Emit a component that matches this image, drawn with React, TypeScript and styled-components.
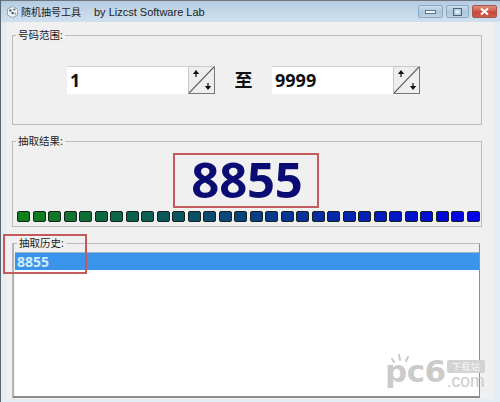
import React from 'react'
import styled, { createGlobalStyle } from 'styled-components'

const GlobalStyle = createGlobalStyle`
    html, body {
        margin: 0;
        padding: 0;
        background: #f0f0f0;
    }
`

const CJK = `"Noto Sans", "Noto Sans CJK SC", sans-serif`

const Window = styled.div`
    position: relative;
    width: 500px;
    height: 402px;
    overflow: hidden;
    box-sizing: border-box;
    display: flex;
    flex-direction: column;
    background: #e4edf4;
    border-left: 1px solid #5d666e;
    border-top: 1px solid #6d767e;
    font-family: ${CJK};
    color: #222;
`

const TitleBar = styled.div`
    height: 21px;
    flex: none;
    display: flex;
    align-items: center;
    padding: 0 3px 0 6px;
    background: linear-gradient(180deg, #b4cbe0 0%, #c6d9ea 55%, #cfdfee 100%);
`

const TitleText = styled.span`
    font-size: 10px;
    margin-left: 3px;
    color: #1c1c1c;
    white-space: nowrap;
`

const TitleBy = styled.span`
    font-family: "Liberation Sans", sans-serif;
    font-size: 11px;
    margin-left: 13px;
    color: #1c1c1c;
    white-space: nowrap;
`

const WindowButtons = styled.div`
    margin-left: auto;
    display: flex;
    gap: 3px;
`

const WindowButton = styled.div<{ $close?: boolean; $width: number }>`
    width: ${p => p.$width}px;
    height: 13px;
    box-sizing: border-box;
    display: flex;
    align-items: center;
    justify-content: center;
    border: 1px solid ${p => (p.$close ? '#a5524a' : '#8ea8c0')};
    border-radius: 2px;
    background: ${p => (p.$close
        ? 'linear-gradient(180deg, #e0907f 0%, #c9483a 60%, #c9604c 100%)'
        : 'linear-gradient(180deg, #c9dcec 0%, #aac5dc 60%, #bcd3e6 100%)')};
`

const Body = styled.div`
    flex: 1;
    margin: 0 6px 3px 5px;
    background: #f0f0f0;
    padding: 6px 0 0 6px;
    display: flex;
    flex-direction: column;
    gap: 9px;
`

const Group = styled.fieldset<{ $width: number; $height: number; $dark?: boolean }>`
    width: ${p => p.$width}px;
    height: ${p => p.$height}px;
    box-sizing: border-box;
    margin: 0;
    padding: 0;
    flex: none;
    min-width: 0;
    border: 1px solid #bcbcbc;
    ${p => p.$dark && `
        border-width: 1px 1px 2px 2px;
        border-left-color: #b4b4b4;
        border-right-color: #8e8e8e;
        border-bottom-color: #8b8b8b;
    `}
`

const Legend = styled.legend`
    margin-left: 3px;
    padding: 0 2px;
    font-size: 10.5px;
    line-height: 14px;
    color: #222;
`

const RangeRow = styled.div`
    display: flex;
    align-items: stretch;
    height: 28px;
    margin: 24px 0 0 54px;
`

const NumberBox = styled.div`
    width: 121px;
    background: #ffffff;
    box-sizing: border-box;
    padding-left: 3px;
    font-family: "Open Sans", sans-serif;
    font-weight: 700;
    font-size: 18px;
    line-height: 27px;
    color: #111;
    border-top: 1px solid #d4d4d4;
`

const Spinner = styled.div`
    width: 27px;
    box-sizing: border-box;
    background: #eeeeee;
    border: 1px solid;
    border-color: #c9c9c9 #777 #777 #c9c9c9;
    line-height: 0;
`

const ToLabel = styled.div`
    width: 57px;
    text-align: center;
    font-size: 18px;
    font-weight: 700;
    line-height: 28px;
    color: #111;
`

const ResultNumber = styled.div`
    text-align: center;
    font-family: "Open Sans", sans-serif;
    font-weight: 700;
    font-size: 49px;
    line-height: 52px;
    color: #0b0b74;
    margin: 5px 0 0 0;
    height: 52px;
    letter-spacing: -0.2px;
`

const Meter = styled.div`
    display: flex;
    gap: 2.5px;
    margin: 6px 0 0 4px;
`

const Cell = styled.div<{ $bg: string }>`
    width: 13px;
    height: 11px;
    flex: none;
    box-sizing: border-box;
    background: ${p => p.$bg};
    border: 1px solid #14231f;
    border-radius: 2px;
`

const HistoryList = styled.div`
    margin: 2px 0 0 1px;
    height: 144px;
    background: #ffffff;
`

const HistoryRow = styled.div`
    height: 18px;
    background: #3b94ec;
    color: #cfeeff;
    padding-left: 2px;
    font-family: "Open Sans", sans-serif;
    font-weight: 700;
    font-size: 14px;
    line-height: 17px;
    border-top: 1px solid #9cb4c9;
    box-sizing: border-box;
`

const RedBox = styled.div<{ $x: number; $y: number; $w: number; $h: number }>`
    position: absolute;
    left: ${p => p.$x}px;
    top: ${p => p.$y}px;
    width: ${p => p.$w}px;
    height: ${p => p.$h}px;
    box-sizing: border-box;
    border: 2px solid #c45a5e;
    pointer-events: none;
`

const Watermark = styled.div`
    position: absolute;
    left: 384px;
    top: 352px;
    width: 106px;
    height: 38px;
    display: flex;
    color: #cbcbcb;
    pointer-events: none;
`

const MarkBig = styled.div`
    font-family: "DejaVu Sans", sans-serif;
    font-weight: 700;
    font-size: 31px;
    line-height: 36px;
    letter-spacing: -0.5px;
`

const MarkRays = styled.svg`
    position: absolute;
    left: 6px;
    top: 1px;
`

const MarkSide = styled.div`
    margin: 7px 0 0 1px;
    display: flex;
    flex-direction: column;
    align-items: stretch;
`

const MarkBadge = styled.div`
    width: 38px;
    height: 13px;
    box-sizing: border-box;
    background: #d3d3d3;
    color: #f6f6f6;
    border-radius: 2px;
    text-align: center;
    font-size: 9.5px;
    line-height: 13px;
    overflow: hidden;
`

const MarkCom = styled.div`
    font-family: "Liberation Sans", sans-serif;
    font-size: 17.5px;
    line-height: 15px;
    margin-top: 1px;
`

function Arrows() {
    return (
        <svg width="25" height="26" viewBox="0 0 25 26">
            <path d="M0 26 L25 0" stroke="#555" strokeWidth="1.2" fill="none" />
            <path d="M7 6 V10 M5 6.5 L7 4 L9 6.5 Z" stroke="#111" strokeWidth="1.2" fill="#111" />
            <path d="M19 16 V20 M17 19.5 L19 22 L21 19.5 Z" stroke="#111" strokeWidth="1.2" fill="#111" />
        </svg>
    )
}

function AppIcon() {
    return (
        <svg width="11" height="12" viewBox="0 0 11 12">
            <path d="M5.5 0.5 L10.5 3 V9 L5.5 11.5 L0.5 9 V3 Z" fill="#eef2f4" stroke="#8a9aa6" strokeWidth="0.8" />
            <circle cx="3.4" cy="4.4" r="1.2" fill="#4a5a62" />
            <circle cx="7.4" cy="3.6" r="1" fill="#4a5a62" />
            <circle cx="5.6" cy="7" r="1.2" fill="#4a5a62" />
            <circle cx="8.4" cy="7.6" r="0.9" fill="#7a8a92" />
        </svg>
    )
}

// green to blue across the meter, same as the original progress bar
const cellColor = (i: number, total: number) => {
    const t = i / (total - 1)
    const r = Math.round(16 * (1 - t))
    const g = Math.round(128 * (1 - t))
    const b = Math.round(26 + (232 - 26) * t)
    return `rgb(${r}, ${g}, ${b})`
}

const cells = Array.from({ length: 30 }, (_, i) => cellColor(i, 30))

export default function App() {
    return (
        <Window>
            <GlobalStyle />
            <TitleBar>
                <AppIcon />
                <TitleText>随机抽号工具</TitleText>
                <TitleBy>by Lizcst Software Lab</TitleBy>
                <WindowButtons>
                    <WindowButton $width={25}>
                        <svg width="11" height="4"><rect x="0.5" y="0.5" width="10" height="3" fill="#eef4f8" stroke="#5f7488" /></svg>
                    </WindowButton>
                    <WindowButton $width={23}>
                        <svg width="9" height="8"><rect x="0.5" y="0.5" width="8" height="7" fill="none" stroke="#4f6478" /><rect x="2.5" y="2.5" width="4" height="3" fill="#eef4f8" /></svg>
                    </WindowButton>
                    <WindowButton $width={25} $close>
                        <svg width="11" height="9"><path d="M2 1.5 L9 7.5 M9 1.5 L2 7.5" stroke="#fff" strokeWidth="2.2" /></svg>
                    </WindowButton>
                </WindowButtons>
            </TitleBar>
            <Body>
                <Group $width={470} $height={97}>
                    <Legend>号码范围:</Legend>
                    <RangeRow>
                        <NumberBox>1</NumberBox>
                        <Spinner><Arrows /></Spinner>
                        <ToLabel>至</ToLabel>
                        <NumberBox>9999</NumberBox>
                        <Spinner><Arrows /></Spinner>
                    </RangeRow>
                </Group>
                <Group $width={470} $height={93}>
                    <Legend>抽取结果:</Legend>
                    <ResultNumber>8855</ResultNumber>
                    <Meter>
                        {cells.map((bg, i) => <Cell key={i} $bg={bg} />)}
                    </Meter>
                </Group>
                <Group $width={468} $height={162} $dark>
                    <Legend>抽取历史:</Legend>
                    <HistoryList>
                        <HistoryRow>8855</HistoryRow>
                    </HistoryList>
                </Group>
            </Body>
            <RedBox $x={172} $y={152} $w={146} $h={55} />
            <RedBox $x={2} $y={233} $w={84} $h={40} />
            <Watermark>
                <MarkRays width="24" height="10" viewBox="0 0 24 10">
                    <path d="M3 8 L1 5 M9 6 L8 1 M15 7 L17 3" stroke="#c9c9c9" strokeWidth="2" strokeLinecap="round" />
                </MarkRays>
                <MarkBig>pc6</MarkBig>
                <MarkSide>
                    <MarkBadge>下载站</MarkBadge>
                    <MarkCom>.com</MarkCom>
                </MarkSide>
            </Watermark>
        </Window>
    )
}
